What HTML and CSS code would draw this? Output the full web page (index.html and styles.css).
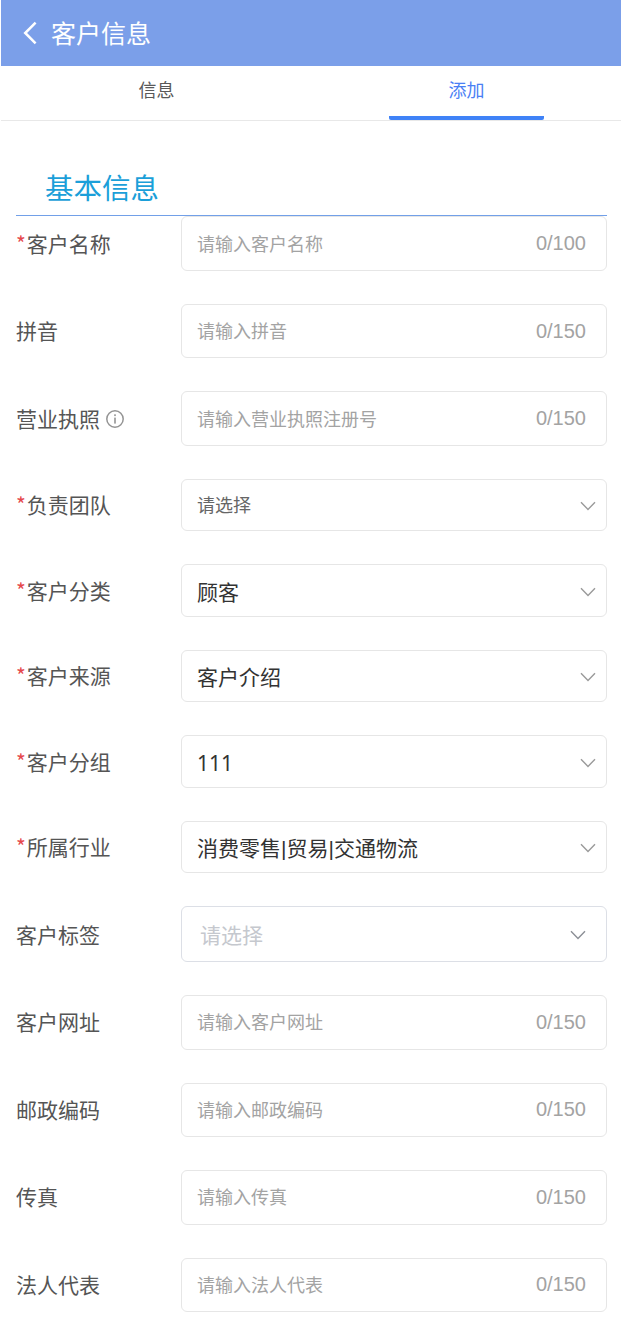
FILE: index.html
```html
<!DOCTYPE html>
<html lang="zh-CN">
<head>
<meta charset="utf-8">
<title>客户信息</title>
<link rel="stylesheet" href="styles.css">
</head>
<body>
<div class="page">
  <header class="topbar">
    <svg class="back" viewBox="0 0 14 24" width="14" height="24"><path d="M12.6 1.6 L2.2 12 L12.6 22.4" fill="none" stroke="#fff" stroke-width="2.5"/></svg>
    <span class="topbar-title">客户信息</span>
  </header>
  <nav class="tabs">
    <div class="tab">信息</div>
    <div class="tab active">添加</div>
  </nav>
  <main class="form">
    <h2 class="section-title">基本信息</h2>
    <div class="fields">
      <div class="row"><label class="label"><i>*</i>客户名称</label><div class="box input"><span class="ph">请输入客户名称</span><span class="count">0/100</span></div></div>
      <div class="row"><label class="label">拼音</label><div class="box input"><span class="ph">请输入拼音</span><span class="count">0/150</span></div></div>
      <div class="row"><label class="label">营业执照<svg class="info" viewBox="0 0 18 18" width="18" height="18"><circle cx="9" cy="9" r="8.2" fill="none" stroke="#959595" stroke-width="1.5"/><rect x="8.2" y="7.6" width="1.6" height="6" fill="#959595"/><rect x="8.2" y="4.3" width="1.6" height="1.8" fill="#959595"/></svg></label><div class="box input"><span class="ph">请输入营业执照注册号</span><span class="count">0/150</span></div></div>
      <div class="row"><label class="label"><i>*</i>负责团队</label><div class="box select"><span class="ph-select">请选择</span><svg class="chev" viewBox="0 0 16 10" width="16" height="10"><path d="M1 1.2 L8 8.4 L15 1.2" fill="none" stroke="#9a9a9a" stroke-width="1.4"/></svg></div></div>
      <div class="row"><label class="label"><i>*</i>客户分类</label><div class="box select"><span class="value">顾客</span><svg class="chev" viewBox="0 0 16 10" width="16" height="10"><path d="M1 1.2 L8 8.4 L15 1.2" fill="none" stroke="#9a9a9a" stroke-width="1.4"/></svg></div></div>
      <div class="row"><label class="label"><i>*</i>客户来源</label><div class="box select"><span class="value">客户介绍</span><svg class="chev" viewBox="0 0 16 10" width="16" height="10"><path d="M1 1.2 L8 8.4 L15 1.2" fill="none" stroke="#9a9a9a" stroke-width="1.4"/></svg></div></div>
      <div class="row"><label class="label"><i>*</i>客户分组</label><div class="box select"><span class="value value-num">111</span><svg class="chev" viewBox="0 0 16 10" width="16" height="10"><path d="M1 1.2 L8 8.4 L15 1.2" fill="none" stroke="#9a9a9a" stroke-width="1.4"/></svg></div></div>
      <div class="row"><label class="label"><i>*</i>所属行业</label><div class="box select"><span class="value">消费零售|贸易|交通物流</span><svg class="chev" viewBox="0 0 16 10" width="16" height="10"><path d="M1 1.2 L8 8.4 L15 1.2" fill="none" stroke="#9a9a9a" stroke-width="1.4"/></svg></div></div>
      <div class="row"><label class="label label-plain">客户标签</label><div class="box tagbox"><span class="ph-tag">请选择</span><svg class="chev" viewBox="0 0 16 10" width="16" height="10"><path d="M1 1.2 L8 8.4 L15 1.2" fill="none" stroke="#8c8f96" stroke-width="1.4"/></svg></div></div>
      <div class="row"><label class="label">客户网址</label><div class="box input"><span class="ph">请输入客户网址</span><span class="count">0/150</span></div></div>
      <div class="row"><label class="label">邮政编码</label><div class="box input"><span class="ph">请输入邮政编码</span><span class="count">0/150</span></div></div>
      <div class="row"><label class="label">传真</label><div class="box input"><span class="ph">请输入传真</span><span class="count">0/150</span></div></div>
      <div class="row"><label class="label">法人代表</label><div class="box input"><span class="ph">请输入法人代表</span><span class="count">0/150</span></div></div>
    </div>
  </main>
</div>
</body>
</html>
```
FILE: styles.css
```css
* { box-sizing: border-box; }
html, body { margin: 0; padding: 0; background: #fff; }
body {
  font-family: "Noto Sans CJK SC", "Noto Sans", sans-serif;
  color: #555;
  overflow: hidden;
  height: 1344px;
}
.page { padding-left: 1px; }
.topbar {
  height: 66px;
  background: #7b9fe9;
  display: flex;
  align-items: center;
  padding-left: 22px;
  color: #fff;
}
.back { margin-right: 14px; }
.topbar-title { font-size: 25px; line-height: 64px; height: 66px; }
.tabs {
  display: grid;
  grid-template-columns: 1fr 1fr;
  height: 55px;
  border-bottom: 1px solid #e8e8e8;
}
.tab {
  font-size: 18px;
  line-height: 47px;
  text-align: center;
  color: #595959;
  width: 155px;
  height: 54px;
  padding-left: 1px;
  justify-self: center;
}
.tab.active {
  color: #4a80f5;
  border-bottom: 4px solid #3f82f7;
  border-radius: 2px;
}
.form { padding: 0 14px 0 15px; }
.section-title {
  margin: 0;
  padding: 42px 0 0 29px;
  height: 95.25px;
  font-size: 28.5px;
  font-weight: 400;
  line-height: 48px;
  color: #1b9fd9;
  border-bottom: 1px solid #72a0e8;
}
.fields { display: flex; flex-direction: column; gap: 33px; }
.row { display: flex; align-items: center; }
.label {
  width: 165px;
  flex: none;
  font-size: 21px;
  line-height: 30px;
  color: #555;
  display: flex;
  align-items: center;
  padding-bottom: 2px;
}
.label-plain { padding-bottom: 0; }
.label i { font-style: normal; color: #e5484d; margin-right: 1px; }
.info { margin-left: 6px; margin-top: 2px; }
.box {
  flex: 1;
  border: 1px solid #e6e6e6;
  border-radius: 6px;
  background: #fff;
  display: flex;
  align-items: center;
  justify-content: space-between;
}
.input { height: 54.5px; padding: 0 20px 2px 15px; }
.select { height: 52.5px; padding: 0 10px 0 15px; }
.tagbox { height: 55.75px; padding: 0 20px 0 18px; border-color: #dcdfe6; }
.chev { margin-top: 2px; }
.ph { font-size: 18px; color: #a3a3a3; }
.ph-select { font-size: 18px; color: #666; margin-top: -2px; }
.ph-tag { font-size: 21px; color: #c5c8ce; }
.value { font-size: 21px; color: #333; font-family: "Liberation Sans", "Noto Sans CJK SC", sans-serif; }
.value-num { font-family: "Noto Sans", sans-serif; margin-top: 2px; }
.count { font-size: 20px; color: #a3a3a3; font-family: "Liberation Sans", sans-serif; margin-top: 2px; }
```
